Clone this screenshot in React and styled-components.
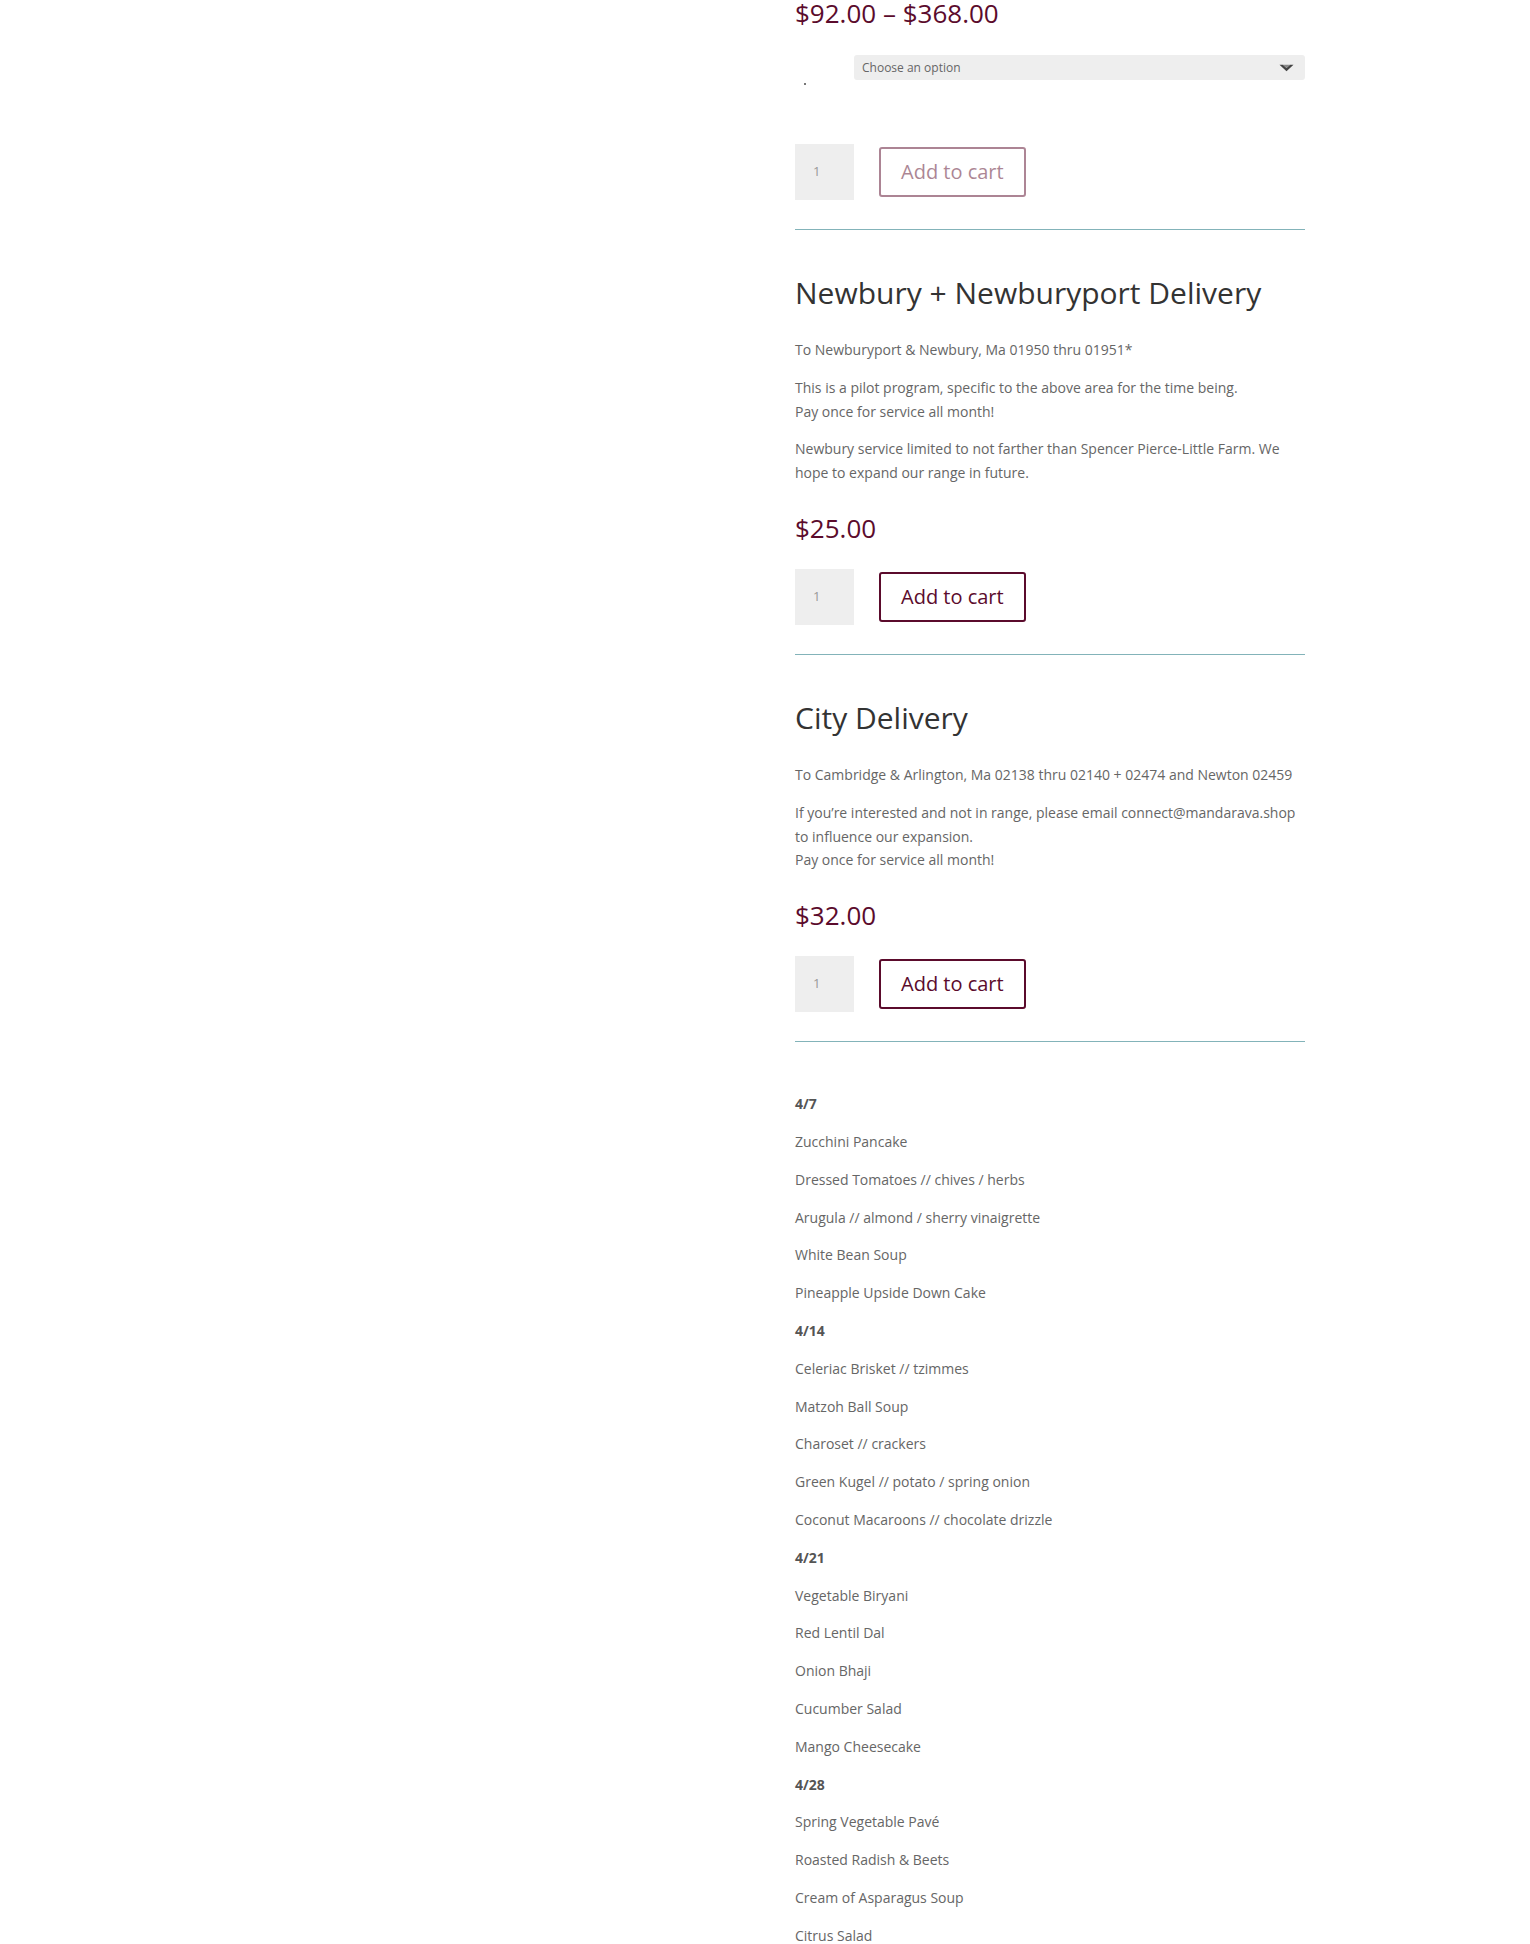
import React from "react";
import styled, { createGlobalStyle } from "styled-components";

const GlobalStyle = createGlobalStyle`
  html, body {
    margin: 0;
    padding: 0;
    background: #fff;
  }
  body {
    font-family: "Open Sans", "Liberation Sans", Arial, sans-serif;
    font-size: 14px;
    line-height: 1.7em;
    color: #666;
  }
`;

//* ----------
//* data
//* ----------
const menu = [
  { date: "4/7", items: ["Zucchini Pancake", "Dressed Tomatoes // chives / herbs", "Arugula // almond / sherry vinaigrette", "White Bean Soup", "Pineapple Upside Down Cake"] },
  { date: "4/14", items: ["Celeriac Brisket // tzimmes", "Matzoh Ball Soup", "Charoset // crackers", "Green Kugel // potato / spring onion", "Coconut Macaroons // chocolate drizzle"] },
  { date: "4/21", items: ["Vegetable Biryani", "Red Lentil Dal", "Onion Bhaji", "Cucumber Salad", "Mango Cheesecake"] },
  { date: "4/28", items: ["Spring Vegetable Pavé", "Roasted Radish & Beets", "Cream of Asparagus Soup", "Citrus Salad"] },
];

function CartForm({ disabled }) {
  return (
    <CartRow>
      <Qty>1</Qty>
      <CartBtn $disabled={disabled}>Add to cart</CartBtn>
    </CartRow>
  );
}

export default function App() {
  return (
    <>
      <GlobalStyle />
      <Page>
        <LeftCol />
        <RightCol>
          {/* variable product */}
          <Price>$92.00 – $368.00</Price>
          <Variations>
            <LabelCell>
              <Dot />
            </LabelCell>
            <Select>
              <span>Choose an option</span>
              <svg width="15" height="8" viewBox="0 0 15 8">
                <path d="M0.5 0.8 L7.5 7.2 L14.5 0.8 L11 0.8 L7.5 4 L4 0.8 Z" fill="#444" />
                <path d="M4 0.8 L7.5 4 L11 0.8 Z" fill="#888" />
              </svg>
            </Select>
          </Variations>
          <CartForm disabled />
          <Divider />

          {/* newbury */}
          <Heading>Newbury + Newburyport Delivery</Heading>
          <Desc>
            <P>To Newburyport &amp; Newbury, Ma 01950 thru 01951*</P>
            <P>
              This is a pilot program, specific to the above area for the time being.
              <br />
              Pay once for service all month!
            </P>
            <P>Newbury service limited to not farther than Spencer Pierce-Little Farm. We hope to expand our range in future.</P>
          </Desc>
          <Price $gap>$25.00</Price>
          <CartForm />
          <Divider />

          {/* city */}
          <Heading>City Delivery</Heading>
          <Desc>
            <P>To Cambridge &amp; Arlington, Ma 02138 thru 02140 + 02474 and Newton 02459</P>
            <P>
              If you’re interested and not in range, please email connect@mandarava.shop to influence our expansion.
              <br />
              Pay once for service all month!
            </P>
          </Desc>
          <Price $gap>$32.00</Price>
          <CartForm />
          <Divider />

          <Menu>
            {menu.map((week) => (
              <React.Fragment key={week.date}>
                <P>
                  <strong>{week.date}</strong>
                </P>
                {week.items.map((item) => (
                  <P key={item}>{item}</P>
                ))}
              </React.Fragment>
            ))}
          </Menu>
        </RightCol>
      </Page>
    </>
  );
}

const Page = styled.div`
  display: grid;
  grid-template-columns: 510px 510px;
  column-gap: 60px;
  justify-content: center;
`;

const LeftCol = styled.div``;

const RightCol = styled.div`
  display: flex;
  flex-direction: column;
`;

const Price = styled.div`
  font-size: 26px;
  line-height: 26px;
  color: #5b0b2c;
  margin-top: ${(p) => (p.$gap ? "16px" : "0")};
`;

const Variations = styled.div`
  display: grid;
  grid-template-columns: 59px 1fr;
  margin-top: 29px;
  height: 61px;
`;

const LabelCell = styled.div`
  position: relative;
`;

const Dot = styled.span`
  position: absolute;
  left: 9px;
  top: 28px;
  width: 2px;
  height: 2px;
  background: #777;
`;

const Select = styled.div`
  height: 25px;
  background: #eee;
  border-radius: 3px;
  display: flex;
  align-items: center;
  justify-content: space-between;
  padding: 0 11px 0 8px;
  font-size: 12px;
  color: #666;
`;

const CartRow = styled.div`
  display: flex;
  align-items: center;
  gap: 25px;
  margin-top: 28px;
`;

const Qty = styled.div`
  width: 59px;
  height: 56px;
  box-sizing: border-box;
  padding-left: 18px;
  background: #eee;
  color: #999;
  font-size: 13px;
  display: flex;
  align-items: center;
`;

const CartBtn = styled.button`
  font-family: "Open Sans", "Liberation Sans", Arial, sans-serif;
  font-size: 20px;
  line-height: 1.7em;
  padding: 0.3em 1em;
  border: 2px solid #5b0b2c;
  border-radius: 3px;
  background: transparent;
  color: #5b0b2c;
  opacity: ${(p) => (p.$disabled ? 0.5 : 1)};
  cursor: pointer;
`;

const Divider = styled.hr`
  margin: 29px 0 0 0;
  border: none;
  border-top: 1px solid #83b3b9;
  width: 100%;
`;

const Heading = styled.h1`
  margin: 48px 0 0 0;
  font-size: 30px;
  line-height: 30px;
  font-weight: 400;
  color: #333;
`;

const Desc = styled.div`
  margin-top: 30px;
`;

const P = styled.p`
  margin: 0;
  padding-bottom: 14px;
  line-height: 23.8px;

  strong {
    font-weight: 700;
    color: #555;
  }
`;

const Menu = styled.div`
  margin-top: 50px;
`;
